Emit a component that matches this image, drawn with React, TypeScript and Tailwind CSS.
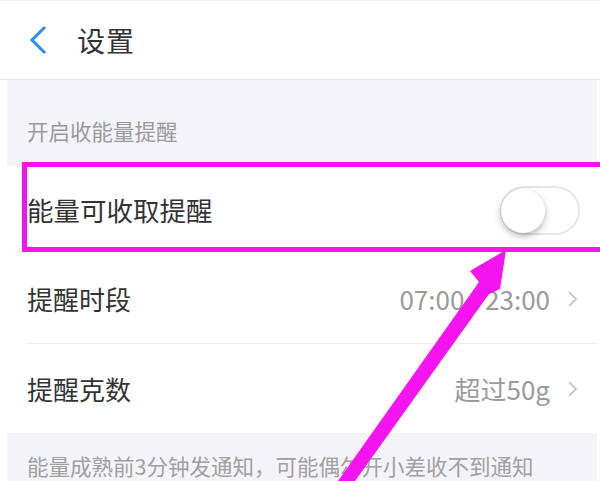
const font = { fontFamily: '"Noto Sans CJK SC", "Noto Sans", sans-serif' };

const Chevron = () => (
  <svg width="12" height="18" viewBox="0 0 12 18" className="ml-[17px] shrink-0">
    <polyline points="2,2 9,9 2,16" fill="none" stroke="#c8c8cc" strokeWidth="1.8" />
  </svg>
);

const Toggle = () => (
  <div className="relative w-[80px] h-[49px] rounded-full border-2 border-[#e6e6e6] bg-white">
    <div className="absolute left-[-1px] top-[1px] size-[44px] rounded-full bg-white shadow-[0_3px_7px_rgba(0,0,0,0.3)]" />
  </div>
);

interface RowProps {
  title: string;
  value?: string;
  divider?: boolean;
}

const Row = ({ title, value, divider }: RowProps) => (
  <div className="bg-white pl-[20px]">
    <div
      className={`flex items-center h-[89px] pr-[18px] ${divider ? "border-b border-[#ececec]" : ""}`}
    >
      <span className="text-[26px] text-[#333] leading-none">{title}</span>
      <span className="ml-auto text-[26px] text-[#9a9a9a] leading-none whitespace-pre">{value}</span>
      <Chevron />
    </div>
  </div>
);

export default function App() {
  return (
    <div className="relative w-[600px] h-[481px] bg-white overflow-hidden" style={font}>
      <div className="flex items-center h-[80px] border-b border-[#e8e8ec] border-t border-t-[#f0f0f0]">
        <svg width="22" height="32" viewBox="0 0 22 32" className="ml-[28px]">
          <polyline points="17,3 4,16 17,29" fill="none" stroke="#2d8ef5" strokeWidth="3" />
        </svg>
        <span className="ml-[27px] text-[28px] tracking-[1px] text-[#333] leading-none">设置</span>
      </div>
      <div className="ml-[7px] mr-[3px] bg-[#f4f4f8]">
        <div className="flex items-center h-[86px] pl-[20px] pt-[16px]">
          <span className="text-[21.5px] text-[#9a9a9a] leading-none">开启收能量提醒</span>
        </div>
        <div className="bg-white pl-[20px]">
          <div className="flex items-center h-[89px] pr-[17px]">
            <span className="text-[26.5px] text-[#333] leading-none">能量可收取提醒</span>
            <div className="ml-auto">
              <Toggle />
            </div>
          </div>
        </div>
        <Row title="提醒时段" value="07:00 - 23:00" divider />
        <Row title="提醒克数" value="超过50g" />
        <div className="flex items-center h-[62px] pl-[20px] pt-[4px]">
          <span className="text-[21.5px] text-[#a0a0a0] leading-none">
            能量成熟前3分钟发通知，可能偶尔开小差收不到通知
          </span>
        </div>
      </div>

      {/* annotation box */}
      <div className="absolute left-[22px] top-[162px] w-[600px] h-[90px] border-[5px] border-[#f514f0]" />

      {/* annotation arrow */}
      <svg className="absolute inset-0" width="600" height="481" viewBox="0 0 600 481">
        <polygon
          points="506,250 470,271 479,282 338,481 355,481 489,294 500,289"
          fill="#f514f0"
        />
      </svg>
    </div>
  );
}
